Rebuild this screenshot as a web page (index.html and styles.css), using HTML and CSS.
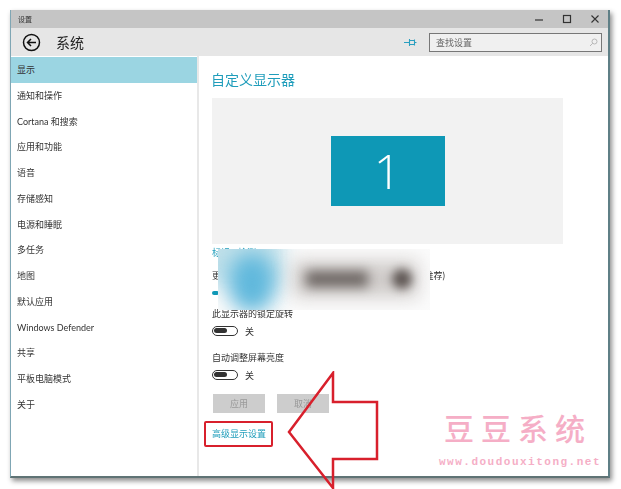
FILE: index.html
```html
<!DOCTYPE html>
<html lang="zh-CN">
<head>
<meta charset="utf-8">
<title>设置</title>
<link rel="stylesheet" href="styles.css">
</head>
<body>
<div class="window">
  <div class="titlebar">
    <span class="title-text">设置</span>
    <div class="controls">
      <svg class="ctl" width="10" height="10" viewBox="0 0 10 10"><path d="M1 6h8" stroke="#333" stroke-width="1.200"/></svg>
      <svg class="ctl" width="10" height="10" viewBox="0 0 10 10"><rect x="1.500" y="1.500" width="7" height="7" fill="none" stroke="#333" stroke-width="1.200"/></svg>
      <svg class="ctl" width="10" height="10" viewBox="0 0 10 10"><path d="M1.500 1.500l7 7M8.500 1.500l-7 7" stroke="#333" stroke-width="1.100"/></svg>
    </div>
  </div>
  <div class="header">
    <svg class="back" width="19" height="19" viewBox="0 0 19 19"><circle cx="9.500" cy="9.500" r="8" fill="none" stroke="#111" stroke-width="1.500"/><path d="M14 9.500H5.500M9 6L5.500 9.500L9 13" fill="none" stroke="#111" stroke-width="1.500"/></svg>
    <span class="header-title">系统</span>
    <svg class="pin" width="13" height="9" viewBox="0 0 13 9"><path d="M0 4.500h5M5.500 1v7M5.500 2.500h5v4h-5M10.500 1.500v6M10.500 4.500h2" fill="none" stroke="#2a9fc0" stroke-width="1.100"/></svg>
    <div class="search">
      <span class="search-text">查找设置</span>
      <svg width="9" height="9" viewBox="0 0 9 9"><circle cx="5.500" cy="3.500" r="2.500" fill="none" stroke="#aaa" stroke-width=".8"/><path d="M3.700 5.300L1 8" stroke="#aaa" stroke-width=".8"/></svg>
    </div>
  </div>
  <div class="content">
    <nav class="sidebar">
      <div class="nav-item selected">显示</div>
      <div class="nav-item">通知和操作</div>
      <div class="nav-item">Cortana 和搜索</div>
      <div class="nav-item">应用和功能</div>
      <div class="nav-item">语音</div>
      <div class="nav-item">存储感知</div>
      <div class="nav-item">电源和睡眠</div>
      <div class="nav-item">多任务</div>
      <div class="nav-item">地图</div>
      <div class="nav-item">默认应用</div>
      <div class="nav-item">Windows Defender</div>
      <div class="nav-item">共享</div>
      <div class="nav-item">平板电脑模式</div>
      <div class="nav-item">关于</div>
    </nav>
    <main class="main">
      <h1 class="heading">自定义显示器</h1>
      <div class="monitor-area"><div class="monitor">1</div></div>
      <div class="links"><span class="link">标识</span><span class="link">检测</span></div>
      <div class="scale-label"><span>更改文本、应用和其他项目的大小: 100%</span><span>(推荐)</span></div>
      <div class="slider"></div>
      <div class="label first">此显示器的锁定旋转</div>
      <div class="toggle-row"><span class="toggle"><span class="knob"></span></span><span>关</span></div>
      <div class="label">自动调整屏幕亮度</div>
      <div class="toggle-row"><span class="toggle"><span class="knob"></span></span><span>关</span></div>
      <div class="buttons"><span class="btn">应用</span><span class="btn">取消</span></div>
      <div class="advanced">高级显示设置</div>
    </main>
  </div>
</div>

<div class="blur-patch">
  <div class="blob blob-haze"></div>
  <div class="blob blob-blue"></div>
  <div class="blob blob-gray-band"></div>
  <div class="blob blob-gray-a"></div>
  <div class="blob blob-gray-b"></div>
</div>

<div class="callout-box"></div>
<svg class="arrow" width="100" height="122" viewBox="0 0 100 122">
  <path d="M46 2L2 61L46 117V88H90V31H46Z" fill="none" stroke="#d8202c" stroke-width="2.500"/>
</svg>

<div class="watermark">
  <div class="wm-title">豆豆系统</div>
  <div class="wm-url">www.doudouxitong.net</div>
</div>
</body>
</html>
```

FILE: styles.css
```css
* { box-sizing: border-box; }
html, body { margin: 0; padding: 0; }
body {
  width: 621px;
  height: 489px;
  background: #fff;
  overflow: hidden;
  position: relative;
  font-family: "Lato", "Noto Sans CJK SC", sans-serif;
  color: #333;
}
.window {
  margin: 10px 0 0 10px;
  width: 600px;
  height: 468px;
  background: #fff;
  border-left: 1px solid #7fa6b4;
  border-right: 2px solid #5f7f86;
  border-bottom: 2px solid #5f7375;
  box-shadow: 2px 3px 5px rgba(0,0,0,.45);
  display: flex;
  flex-direction: column;
  overflow: hidden;
}
.titlebar {
  height: 18px;
  background: #c5c5c5;
  display: flex;
  align-items: center;
  justify-content: space-between;
  padding-left: 7px;
  padding-right: 8px;
  flex: none;
}
.title-text { font-size: 7px; color: #333; filter: blur(.3px); }
.controls { display: flex; gap: 18px; align-items: center; }
.ctl { display: block; }
.header {
  height: 28px;
  background: #e6e6e6;
  display: flex;
  align-items: center;
  padding-left: 11px;
  flex: none;
}
.back { display: block; flex: none; }
.header-title { font-size: 14px; color: #222; margin-left: 15px; width: 348px; filter: blur(.3px); }
.pin { display: block; margin-right: 12px; flex: none; }
.search {
  width: 173px;
  height: 19px;
  background: #f0f0f0;
  border: 1px solid #777;
  display: flex;
  align-items: center;
  justify-content: space-between;
  padding: 0 3px 0 6px;
}
.search-text { font-size: 9px; color: #666; filter: blur(.3px); }
.content { flex: 1; display: flex; min-height: 0; }
.sidebar {
  width: 188px;
  flex: none;
  padding-top: 1px;
  border-right: 2px solid #e8e8e8;
}
.nav-item {
  height: 25.75px;
  line-height: 25px;
  padding-left: 6px;
  font-size: 9px;
  color: #333;
  white-space: nowrap;
  filter: blur(.3px);
}
.nav-item.selected { background: #9bd5e2; filter: none; }
.main { flex: 1; padding: 14px 0 0 13px; min-width: 0; filter: blur(.25px); }
.heading {
  margin: 0 0 0 -1px;
  font-size: 14px;
  font-weight: 400;
  line-height: 20px;
  color: #1f9dbb;
}
.monitor-area {
  margin-top: 8px;
  width: 351px;
  height: 146px;
  background: #f2f2f2;
  display: flex;
  align-items: center;
  justify-content: center;
}
.monitor {
  width: 114px;
  height: 70px;
  background: #0e98b6;
  color: #fff;
  font-family: "Open Sans", "Noto Sans", sans-serif;
  font-weight: 300;
  font-size: 48px;
  line-height: 70px;
  text-align: center;
}
.links {
  display: flex;
  gap: 8px;
  margin-top: 3px;
  height: 12px;
  font-size: 9px;
  line-height: 12px;
}
.link { color: #1f9dbb; }
.scale-label {
  margin-top: 11px;
  width: 233px;
  font-size: 9px;
  line-height: 12px;
  height: 12px;
  display: flex;
  justify-content: space-between;
  white-space: nowrap;
  color: #333;
}
.slider {
  margin-top: 9px;
  width: 7px;
  height: 4px;
  border-radius: 2px;
  background: #0e98b6;
}
.label { font-size: 9px; line-height: 12px; height: 12px; color: #333; margin-top: 16px; }
.label.first { margin-top: 13px; }
.toggle-row {
  display: flex;
  align-items: center;
  gap: 7px;
  margin-top: 6px;
  height: 10px;
  font-size: 9px;
  color: #333;
}
.toggle {
  display: block;
  width: 26px;
  height: 10px;
  border: 1.500px solid #333;
  border-radius: 5px;
  padding: 1px;
}
.knob { display: block; width: 13px; height: 5px; background: #333; border-radius: 3px; }
.buttons { display: flex; gap: 12px; margin-top: 14px; margin-left: 1px; }
.btn {
  width: 52px;
  height: 19px;
  background: #cdcdcd;
  color: #999;
  font-size: 9px;
  line-height: 19px;
  text-align: center;
}
.advanced {
  margin-top: 15px;
  font-size: 9px;
  line-height: 12px;
  color: #1f9dbb;
}
.blur-patch {
  position: absolute;
  left: 218px;
  top: 249px;
  width: 212px;
  height: 61px;
  background: #fbfbfb;
  overflow: hidden;
}
.blob { position: absolute; }
.blob-haze {
  left: -20px; top: -20px; width: 85px; height: 55px;
  background: #bfe0ea;
  filter: blur(10px);
}
.blob-blue {
  left: 10px; top: 4px; width: 48px; height: 60px;
  background: #60b8dc;
  border-radius: 50%;
  filter: blur(10px);
}
.blob-gray-band {
  left: 75px; top: 12px; width: 125px; height: 36px;
  background: #cfcbc9;
  filter: blur(9px);
}
.blob-gray-a {
  left: 88px; top: 22px; width: 62px; height: 16px;
  background: #6e6764;
  filter: blur(6px);
}
.blob-gray-b {
  left: 174px; top: 20px; width: 20px; height: 20px;
  background: #5f5754;
  border-radius: 50%;
  filter: blur(5px);
}
.callout-box {
  position: absolute;
  left: 204px;
  top: 421px;
  width: 69px;
  height: 26px;
  border: 2px solid #d8202c;
  border-radius: 2px;
}
.arrow {
  position: absolute;
  left: 287px;
  top: 371px;
}
.watermark {
  position: absolute;
  left: 436px;
  top: 409px;
  width: 164px;
  color: #f5aec6;
  text-align: center;
}
.wm-title {
  font-family: "Noto Sans CJK SC", serif;
  font-weight: 500;
  font-size: 30px;
  line-height: 36px;
  letter-spacing: 7px;
  white-space: nowrap;
}
.wm-url {
  font-family: "Liberation Mono", monospace;
  font-size: 11px;
  font-weight: 700;
  line-height: 14px;
  letter-spacing: 1.500px;
  margin-top: 10px;
  margin-left: 3px;
  white-space: nowrap;
}
```
